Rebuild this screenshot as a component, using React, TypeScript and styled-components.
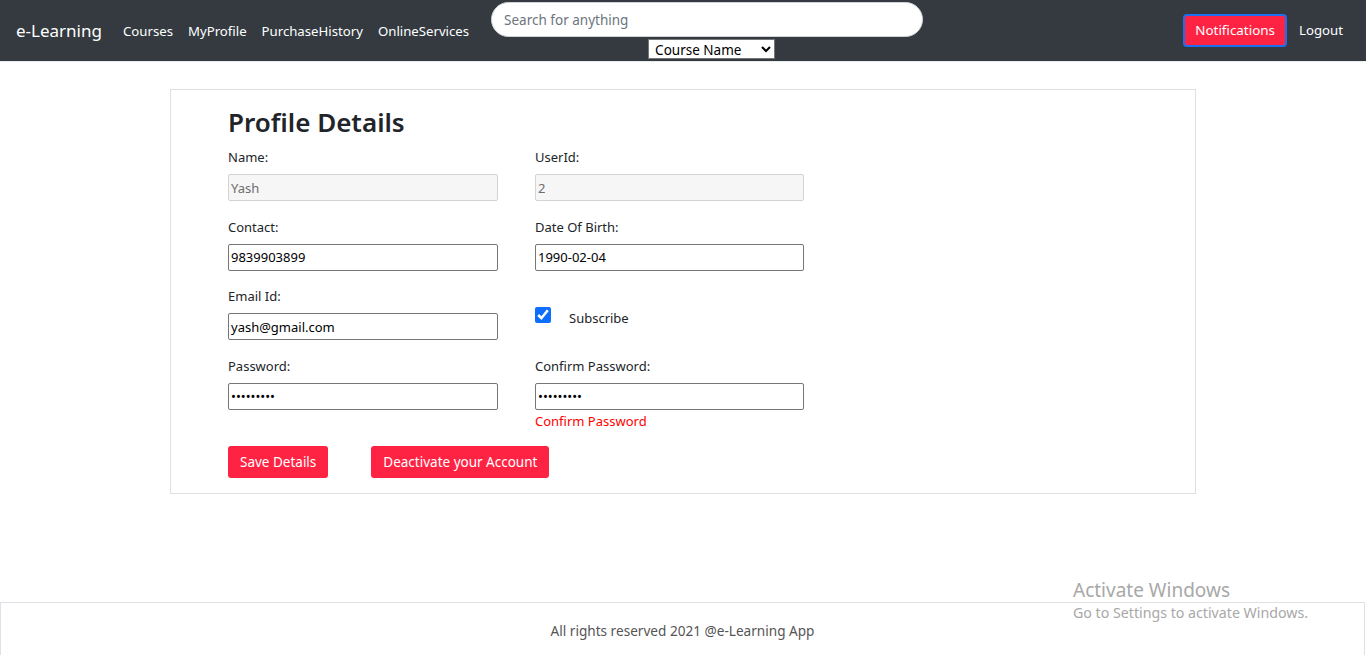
import React from "react";
import styled, { createGlobalStyle } from "styled-components";

const GlobalStyle = createGlobalStyle`
  * { box-sizing: border-box; }
  html, body { margin: 0; padding: 0; overflow: hidden; }
  body {
    font-family: "Noto Sans", "Open Sans", "DejaVu Sans", sans-serif;
    color: #212529;
    background: #ffffff;
  }
`;

const Page = styled.div`
  min-height: 100vh;
  display: flex;
  flex-direction: column;
  position: relative;
`;

const Navbar = styled.nav`
  height: 62px;
  background: #343a40;
  border-bottom: 1px solid #e9ecef;
  display: flex;
  align-items: flex-start;
  padding: 0 23px 0 16px;
`;

const Brand = styled.a`
  color: #ffffff;
  font-size: 17px;
  line-height: 62px;
  margin-right: 21px;
  text-decoration: none;
`;

const NavLinks = styled.div`
  display: flex;
  gap: 15px;
  align-items: center;
  height: 62px;
`;

const NavLink = styled.a`
  color: #ffffff;
  font-size: 13.2px;
  text-decoration: none;
`;

const SearchGroup = styled.div`
  display: flex;
  flex-direction: column;
  align-items: center;
  margin-left: 22px;
  padding-top: 2px;
  gap: 2px;
`;

const SearchInput = styled.input`
  width: 432px;
  height: 35px;
  border-radius: 18px;
  border: 1px solid #ced4da;
  background: #ffffff;
  padding: 1px 12px 0;
  font-family: inherit;
  font-size: 13.5px;
  outline: none;
  &::placeholder { color: #6c757d; }
`;

const Select = styled.select`
  width: 127px;
  height: 20px;
  font-family: inherit;
  font-size: 13.5px;
  color: #000;
  background: #fff;
  border: 1px solid #767676;
  border-radius: 0;
  padding: 0 2px;
  margin-left: 9px;
`;

const Spacer = styled.div`
  flex: 1;
`;

const RightNav = styled.div`
  display: flex;
  align-items: center;
  gap: 12px;
  height: 62px;
  margin-top: -1px;
`;

const NotifyButton = styled.button`
  height: 33px;
  width: 104px;
  background: #ff2343;
  color: #ffffff;
  border: 2px solid #1e6ff0;
  border-radius: 4px;
  font-family: inherit;
  font-size: 13.4px;
  padding: 0;
`;

const Main = styled.main`
  flex: 1;
  display: flex;
  justify-content: center;
  padding-top: 27px;
`;

const Card = styled.section`
  width: 1026px;
  height: 405px;
  border: 1px solid #dfdfdf;
  padding: 14px 57px 0;
`;

const Title = styled.h1`
  margin: 0 0 7px;
  font-size: 26px;
  font-weight: 600;
  line-height: 36px;
  color: #212529;
`;

const FormGrid = styled.div`
  display: grid;
  grid-template-columns: 270px 269px;
  column-gap: 37px;
  row-gap: 15.5px;
`;

const Field = styled.div`
  display: flex;
  flex-direction: column;
  position: relative;
`;

const Label = styled.label`
  font-size: 13px;
  line-height: 20px;
  height: 20px;
  margin-bottom: 7px;
  color: #212529;
`;

const TextInput = styled.input<{ $disabled?: boolean }>`
  width: 100%;
  height: 27px;
  font-family: inherit;
  font-size: 13px;
  padding: 0 2px;
  border-radius: 2px;
  border: 1px solid ${(p) => (p.$disabled ? "#d3d3d3" : "#767676")};
  background: ${(p) => (p.$disabled ? "#f6f6f6" : "#ffffff")};
  color: ${(p) => (p.$disabled ? "#6d6d6d" : "#000000")};
  outline: none;
`;

const CheckRow = styled.div`
  display: flex;
  align-items: center;
  gap: 18px;
  padding-top: 23px;
  font-size: 13px;
  color: #212529;
`;

const CheckBox = styled.input`
  width: 16px;
  height: 16px;
  margin: 0;
  accent-color: #0d6efd;
  position: relative;
  top: -3px;
`;

const ErrorText = styled.div`
  color: #ff0000;
  font-size: 13px;
  line-height: 20px;
  margin-top: 1px;
`;

const ButtonRow = styled.div`
  display: flex;
  gap: 43px;
  margin-top: 15px;
`;

const RedButton = styled.button`
  height: 32px;
  padding: 0 12px;
  background: #ff2343;
  color: #ffffff;
  border: none;
  border-radius: 3px;
  font-family: inherit;
  font-size: 13.5px;
`;

const Footer = styled.footer`
  height: 53px;
  border: 1px solid #dee2e6;
  border-bottom: none;
  margin-right: 1px;
  display: flex;
  justify-content: center;
  padding-top: 18px;
  font-size: 13.6px;
  color: #555555;
`;

const Watermark = styled.div`
  position: absolute;
  left: 1073px;
  top: 578px;
  color: #a8a8a8;
  pointer-events: none;
`;

const WatermarkTitle = styled.div`
  font-size: 19px;
  line-height: 24px;
`;

const WatermarkSub = styled.div`
  font-size: 14.2px;
  line-height: 22px;
`;

export default function App() {
  return (
    <>
      <GlobalStyle />
      <Page>
        <Navbar>
          <Brand href="#">e-Learning</Brand>
          <NavLinks>
            <NavLink href="#">Courses</NavLink>
            <NavLink href="#">MyProfile</NavLink>
            <NavLink href="#">PurchaseHistory</NavLink>
            <NavLink href="#">OnlineServices</NavLink>
          </NavLinks>
          <SearchGroup>
            <SearchInput placeholder="Search for anything" />
            <Select defaultValue="name">
              <option value="name">Course Name</option>
              <option value="author">Author</option>
            </Select>
          </SearchGroup>
          <Spacer />
          <RightNav>
            <NotifyButton>Notifications</NotifyButton>
            <NavLink href="#">Logout</NavLink>
          </RightNav>
        </Navbar>
        <Main>
          <Card>
            <Title>Profile Details</Title>
            <FormGrid>
              <Field>
                <Label>Name:</Label>
                <TextInput $disabled disabled defaultValue="Yash" />
              </Field>
              <Field>
                <Label>UserId:</Label>
                <TextInput $disabled disabled defaultValue="2" />
              </Field>
              <Field>
                <Label>Contact:</Label>
                <TextInput defaultValue="9839903899" />
              </Field>
              <Field>
                <Label>Date Of Birth:</Label>
                <TextInput defaultValue="1990-02-04" />
              </Field>
              <Field>
                <Label>Email Id:</Label>
                <TextInput defaultValue="yash@gmail.com" />
              </Field>
              <Field>
                <CheckRow>
                  <CheckBox type="checkbox" defaultChecked />
                  <span>Subscribe</span>
                </CheckRow>
              </Field>
              <Field>
                <Label>Password:</Label>
                <TextInput type="password" defaultValue="123456789" />
              </Field>
              <Field>
                <Label>Confirm Password:</Label>
                <TextInput type="password" defaultValue="123456789" />
                <ErrorText>Confirm Password</ErrorText>
              </Field>
            </FormGrid>
            <ButtonRow>
              <RedButton>Save Details</RedButton>
              <RedButton>Deactivate your Account</RedButton>
            </ButtonRow>
          </Card>
        </Main>
        <Footer>All rights reserved 2021 @e-Learning App</Footer>
        <Watermark>
          <WatermarkTitle>Activate Windows</WatermarkTitle>
          <WatermarkSub>Go to Settings to activate Windows.</WatermarkSub>
        </Watermark>
      </Page>
    </>
  );
}
